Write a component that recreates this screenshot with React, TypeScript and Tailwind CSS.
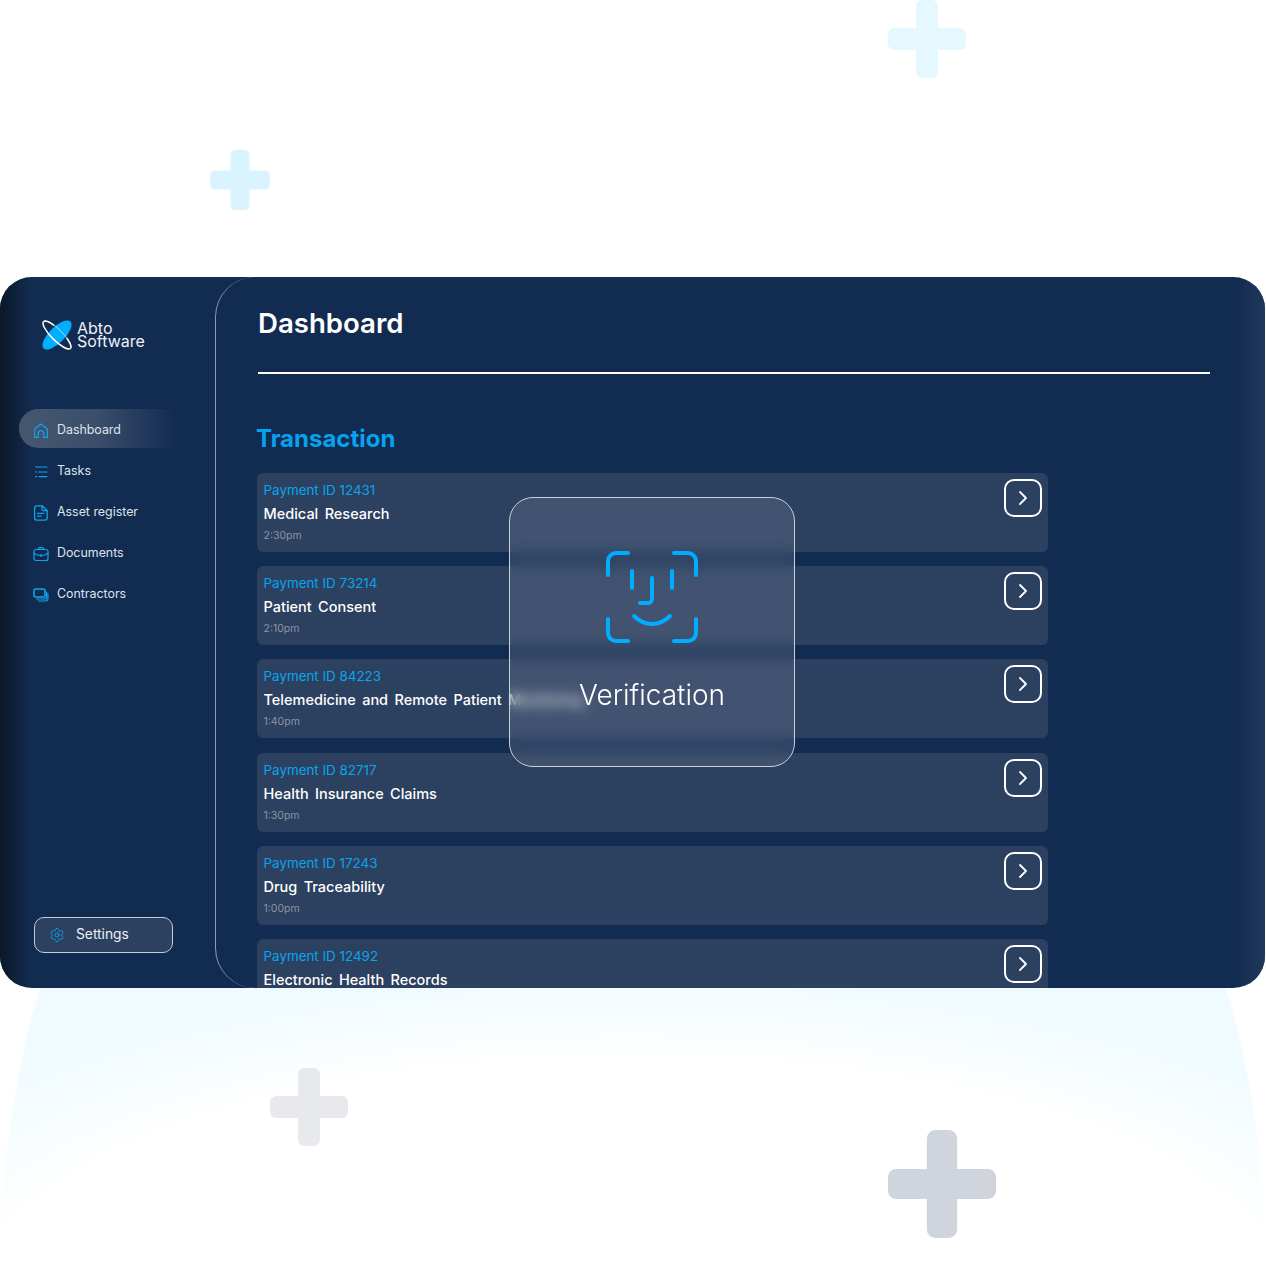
import { Settings, ChevronRight } from "lucide-react";

const FONT = "font-['Inter','Liberation_Sans',sans-serif]";

const rows = [
  { id: "Payment ID 12431", title: "Medical Research", time: "2:30pm" },
  { id: "Payment ID 73214", title: "Patient Consent", time: "2:10pm" },
  { id: "Payment ID 84223", title: "Telemedicine and Remote Patient Monitoring", time: "1:40pm" },
  { id: "Payment ID 82717", title: "Health Insurance Claims", time: "1:30pm" },
  { id: "Payment ID 17243", title: "Drug Traceability", time: "1:00pm" },
  { id: "Payment ID 12492", title: "Electronic Health Records", time: "12:40pm" },
];

function Cross({ className, arm, color }: { className: string; arm: number; color: string }) {
  const o = (100 - arm) / 2;
  return (
    <svg viewBox="0 0 100 100" className={className} fill={color}>
      <rect x={o} y="0" width={arm} height="100" rx={arm * 0.28} />
      <rect x="0" y={o} width="100" height={arm} rx={arm * 0.28} />
    </svg>
  );
}

function Logo() {
  return (
    <svg width="30" height="30" viewBox="0 0 30 30" fill="none">
      <g transform="rotate(-45 15 15)">
        <ellipse cx="15" cy="15" rx="19" ry="7.8" fill="#00aeff" />
      </g>
      <g transform="translate(15 15) rotate(45)">
        <path d="M-19 0A19 5.5 0 0 1 19 0" stroke="#fff" strokeOpacity="0.45" strokeWidth="1.2" />
        <path d="M-19 0A19 5.5 0 0 0 19 0" stroke="#fff" strokeWidth="1.5" />
        <path d="M-19 0A19 5.5 0 0 1 -9 -4.7" stroke="#fff" strokeWidth="1.5" />
        <path d="M19 0A19 5.5 0 0 0 9 -4.7" stroke="#fff" strokeWidth="1.5" />
      </g>
    </svg>
  );
}

const iconProps = {
  width: 16,
  height: 16,
  viewBox: "0 0 16 16",
  fill: "none",
  stroke: "#0fa4ee",
  strokeWidth: 1.2,
  strokeLinecap: "round" as const,
  strokeLinejoin: "round" as const,
};

function HomeIcon() {
  return (
    <svg {...iconProps}>
      <path d="M1.6 14.4V7.2c0-.8.3-1.4.9-1.9L8 1l5.5 4.3c.6.5.9 1.1.9 1.9v7.2h-3.6V10.4a2.8 2.8 0 0 0-5.6 0v4Z" />
    </svg>
  );
}

function TasksIcon() {
  return (
    <svg {...iconProps}>
      <path d="M2.5 3h11.5" />
      <path d="M2.5 8h1.2M6 8h8" />
      <path d="M2.5 12.6h1.2M6 12.6h8" />
    </svg>
  );
}

function DocIcon() {
  return (
    <svg {...iconProps} strokeWidth={1.3}>
      <path d="M4 .8h5.2l5 4.8v7.2c0 1.4-1 2.4-2.4 2.4H4c-1.4 0-2.4-1-2.4-2.4V3.2C1.6 1.8 2.6.8 4 .8Z" />
      <path d="M9 1v3c0 1 .6 1.6 1.6 1.6h3.4" />
      <path d="M4.6 8.4h6.4M4.6 11.2h3.4" />
    </svg>
  );
}

function BriefcaseIcon() {
  return (
    <svg {...iconProps}>
      <path d="M5.5 3.5V2.6c0-.6.4-1 1-1h3c.6 0 1 .4 1 1v.9" />
      <rect x="1" y="3.5" width="14" height="11" rx="2" />
      <path d="M1 7.2c2 1.6 4.4 2.3 7 2.3s5-.7 7-2.3" />
      <path d="M8 8.4v2" />
    </svg>
  );
}

function ContractorsIcon() {
  return (
    <svg {...iconProps}>
      <rect x="1" y="2" width="11" height="8" rx="1.6" strokeWidth="1.6" />
      <path d="M3.5 12h8c1.2 0 2-.8 2-2V5" />
      <path d="M5.5 14h7c1.4 0 2.4-1 2.4-2.4V6.5" />
    </svg>
  );
}

function FaceIcon() {
  return (
    <svg width="94" height="94" viewBox="-1 -1 94 94" fill="none" stroke="#00aeff" strokeWidth="4" strokeLinecap="round" strokeLinejoin="round">
      <path d="M2 24V10a8 8 0 0 1 8-8h12" />
      <path d="M68 2h14a8 8 0 0 1 8 8v14" />
      <path d="M2 68v14a8 8 0 0 0 8 8h12" />
      <path d="M90 68v14a8 8 0 0 1-8 8H68" />
      <path d="M26 20v17" />
      <path d="M66 20v17" />
      <path d="M46 27v21a4 4 0 0 1-4 4h-8" />
      <path d="M28 65c5 5 11 8 18 8s13-3 18-8" />
    </svg>
  );
}

function NavItem({ icon, label, active }: { icon: React.ReactNode; label: string; active?: boolean }) {
  return (
    <div
      className={
        "flex h-[39px] w-[156px] items-center gap-[8px] rounded-l-[20px] pl-[14px] pt-[4px] text-[12.4px] text-[#dfe4ea] " +
        (active ? "bg-gradient-to-r from-[#46586f] via-[#3a4e6b] to-[#122c51]" : "")
      }
    >
      <span className="flex w-[16px] justify-center">{icon}</span>
      <span>{label}</span>
    </div>
  );
}

function Row({ id, title, time }: { id: string; title: string; time: string }) {
  return (
    <div className="flex h-[79px] w-[791px] items-start justify-between rounded-[6px] bg-[#2c4060] pl-[6.5px] pr-[6px] pt-[6px]">
      <div className="flex flex-col">
        <span className="h-[23px] text-[13.4px] leading-[23px] text-[#0aa5ee]">{id}</span>
        <span className="h-[24px] text-[14.5px] font-medium leading-[24px] text-white [word-spacing:2.5px]">{title}</span>
        <span className="h-[20px] text-[10.5px] leading-[20px] text-[#8b95a3]">{time}</span>
      </div>
      <div className="flex h-[38px] w-[38px] items-center justify-center rounded-[10px] border-2 border-white">
        <ChevronRight size={24} color="#fff" strokeWidth={1.8} />
      </div>
    </div>
  );
}

export default function App() {
  return (
    <div className={"relative h-[1266px] w-[1266px] overflow-hidden bg-white pt-[277px] " + FONT}>
      <div className="absolute left-0 top-[472px] h-[1588px] w-[1266px] rounded-[50%] bg-[radial-gradient(ellipse_865px_325px_at_633px_828px,#ffffff_74%,#f0fbff_100%)]" />
      <Cross className="absolute left-[888px] top-0 h-[78px] w-[78px]" arm={28} color="#e5f7ff" />
      <Cross className="absolute left-[210px] top-[150px] h-[60px] w-[60px]" arm={32} color="#d9f3ff" />
      <Cross className="absolute left-[270px] top-[1068px] h-[78px] w-[78px]" arm={28} color="#e7e9ed" />
      <Cross className="absolute left-[888px] top-[1130px] h-[108px] w-[108px]" arm={28} color="#d0d5dd" />

      <div className="relative flex h-[711px] w-[1265px] overflow-hidden rounded-[32px] bg-[#122c51]">
        <div className="pointer-events-none absolute inset-y-0 left-0 w-[32px] bg-gradient-to-r from-[#0a1829] to-transparent" />
        <div className="pointer-events-none absolute inset-y-0 right-0 w-[28px] bg-gradient-to-l from-[#20385a] to-transparent" />

        <aside className="relative flex w-[215px] shrink-0 flex-col pl-[19px]">
          <div className="ml-[23px] mt-[43px] flex items-center gap-[5px]">
            <Logo />
            <div className="text-[16px] leading-[13px] text-[#eef1f5]">
              <div>Abto</div>
              <div>Software</div>
            </div>
          </div>
          <nav className="mt-[59px] flex flex-col gap-[2px]">
            <NavItem active icon={<HomeIcon />} label="Dashboard" />
            <NavItem icon={<TasksIcon />} label="Tasks" />
            <NavItem icon={<DocIcon />} label="Asset register" />
            <NavItem icon={<BriefcaseIcon />} label="Documents" />
            <NavItem icon={<ContractorsIcon />} label="Contractors" />
          </nav>
          <div className="mb-[35px] ml-[15px] mt-auto flex h-[36px] w-[139px] items-center gap-[11px] rounded-[10px] border border-[#c5ccd6] bg-[#2c4060] pl-[14px] text-[13.8px] text-[#eef1f5]">
            <Settings size={16} color="#0fa4ee" strokeWidth={1.3} />
            <span className="pb-[2px]">Settings</span>
          </div>
        </aside>

        <main className="relative min-w-0 flex-1 overflow-hidden rounded-l-[40px] border-l border-[#8c9bb0] pl-[41px]">
          <h1 className="ml-[1px] mt-[28px] text-[27.6px] font-semibold leading-[36px] text-white">Dashboard</h1>
          <div className="ml-[1px] mt-[31px] h-[2px] w-[952px] bg-white" />
          <h2 className="-ml-[1px] mt-[50px] text-[24px] font-bold leading-[30px] text-[#05a3ef]">Transaction</h2>
          <div className="mt-[19px] flex flex-col gap-[14.2px]">
            {rows.map((r) => (
              <Row key={r.id} {...r} />
            ))}
          </div>
        </main>

        <div className="absolute left-[509px] top-[220px] flex h-[270px] w-[286px] flex-col items-center rounded-[24px] border border-[#c9d0da] bg-white/10 pt-[52px] backdrop-blur-[7px]">
          <FaceIcon />
          <span className="mt-[33px] text-[28px] font-light leading-[36px] text-white">Verification</span>
        </div>
      </div>
    </div>
  );
}
